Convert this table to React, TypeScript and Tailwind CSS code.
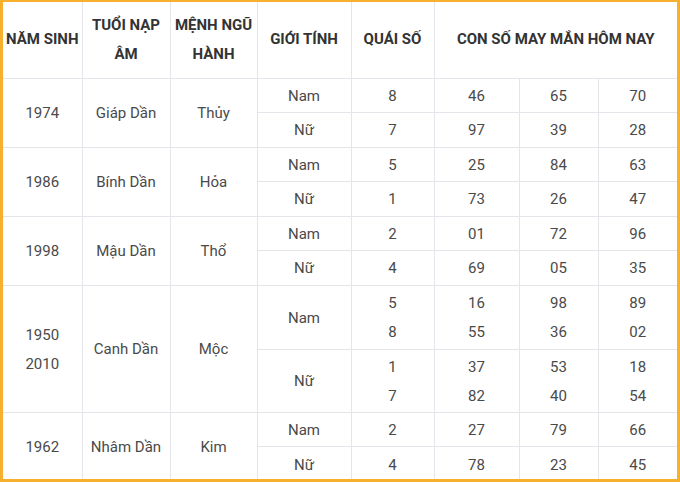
import React from "react";

type Gender = { g: string; q: string[]; nums: string[][] };
type Group = { years: string[]; tuoi: string; menh: string; rows: Gender[] };

const data: Group[] = [
  {
    years: ["1974"],
    tuoi: "Giáp Dần",
    menh: "Thủy",
    rows: [
      { g: "Nam", q: ["8"], nums: [["46"], ["65"], ["70"]] },
      { g: "Nữ", q: ["7"], nums: [["97"], ["39"], ["28"]] },
    ],
  },
  {
    years: ["1986"],
    tuoi: "Bính Dần",
    menh: "Hỏa",
    rows: [
      { g: "Nam", q: ["5"], nums: [["25"], ["84"], ["63"]] },
      { g: "Nữ", q: ["1"], nums: [["73"], ["26"], ["47"]] },
    ],
  },
  {
    years: ["1998"],
    tuoi: "Mậu Dần",
    menh: "Thổ",
    rows: [
      { g: "Nam", q: ["2"], nums: [["01"], ["72"], ["96"]] },
      { g: "Nữ", q: ["4"], nums: [["69"], ["05"], ["35"]] },
    ],
  },
  {
    years: ["1950", "2010"],
    tuoi: "Canh Dần",
    menh: "Mộc",
    rows: [
      { g: "Nam", q: ["5", "8"], nums: [["16", "55"], ["98", "36"], ["89", "02"]] },
      { g: "Nữ", q: ["1", "7"], nums: [["37", "82"], ["53", "40"], ["18", "54"]] },
    ],
  },
  {
    years: ["1962"],
    tuoi: "Nhâm Dần",
    menh: "Kim",
    rows: [
      { g: "Nam", q: ["2"], nums: [["27"], ["79"], ["66"]] },
      { g: "Nữ", q: ["4"], nums: [["78"], ["23"], ["45"]] },
    ],
  },
];

const cell = "border border-[#e4e4ea] text-center align-middle p-0";
const td = cell + " pt-[2px]";

const Lines = ({ items }: { items: string[] }) => (
  <>
    {items.map((t, i) => (
      <div key={i}>{t}</div>
    ))}
  </>
);

export default function App() {
  return (
    <div
      className="w-[680px] h-[482px] overflow-hidden bg-white border-[#f6b02e] border-l-[3px] border-r-[3px] border-t-2 border-b-[3px]"
      style={{ fontFamily: "Roboto, 'Liberation Sans', sans-serif" }}
    >
      <table className="w-[674px] table-fixed border-collapse border-hidden text-[15px] leading-[29px] text-[#4a4a4a]">
        <colgroup>
          <col className="w-[79px]" />
          <col className="w-[88px]" />
          <col className="w-[87px]" />
          <col className="w-[94px]" />
          <col className="w-[83px]" />
          <col className="w-[85px]" />
          <col className="w-[79px]" />
          <col className="w-[79px]" />
        </colgroup>
        <thead>
          <tr className="h-[76px] font-bold text-[#333]">
            <th className={cell}>NĂM SINH</th>
            <th className={cell}>TUỔI NẠP ÂM</th>
            <th className={cell}>MỆNH NGŨ HÀNH</th>
            <th className={cell}>GIỚI TÍNH</th>
            <th className={cell}>QUÁI SỐ</th>
            <th className={cell} colSpan={3}>
              CON SỐ MAY MẮN HÔM NAY
            </th>
          </tr>
        </thead>
        <tbody>
          {data.map((grp) =>
            grp.rows.map((r, i) => (
              <tr
                key={grp.tuoi + r.g}
                className={grp.years.length > 1 ? (i === 0 ? "h-[64px]" : "h-[63px]") : "h-[34.5px]"}
              >
                {i === 0 && (
                  <>
                    <td className={td} rowSpan={2}>
                      <Lines items={grp.years} />
                    </td>
                    <td className={td} rowSpan={2}>
                      {grp.tuoi}
                    </td>
                    <td className={td} rowSpan={2}>
                      {grp.menh}
                    </td>
                  </>
                )}
                <td className={td}>{r.g}</td>
                <td className={td}>
                  <Lines items={r.q} />
                </td>
                {r.nums.map((n, k) => (
                  <td key={k} className={td}>
                    <Lines items={n} />
                  </td>
                ))}
              </tr>
            ))
          )}
        </tbody>
      </table>
    </div>
  );
}
